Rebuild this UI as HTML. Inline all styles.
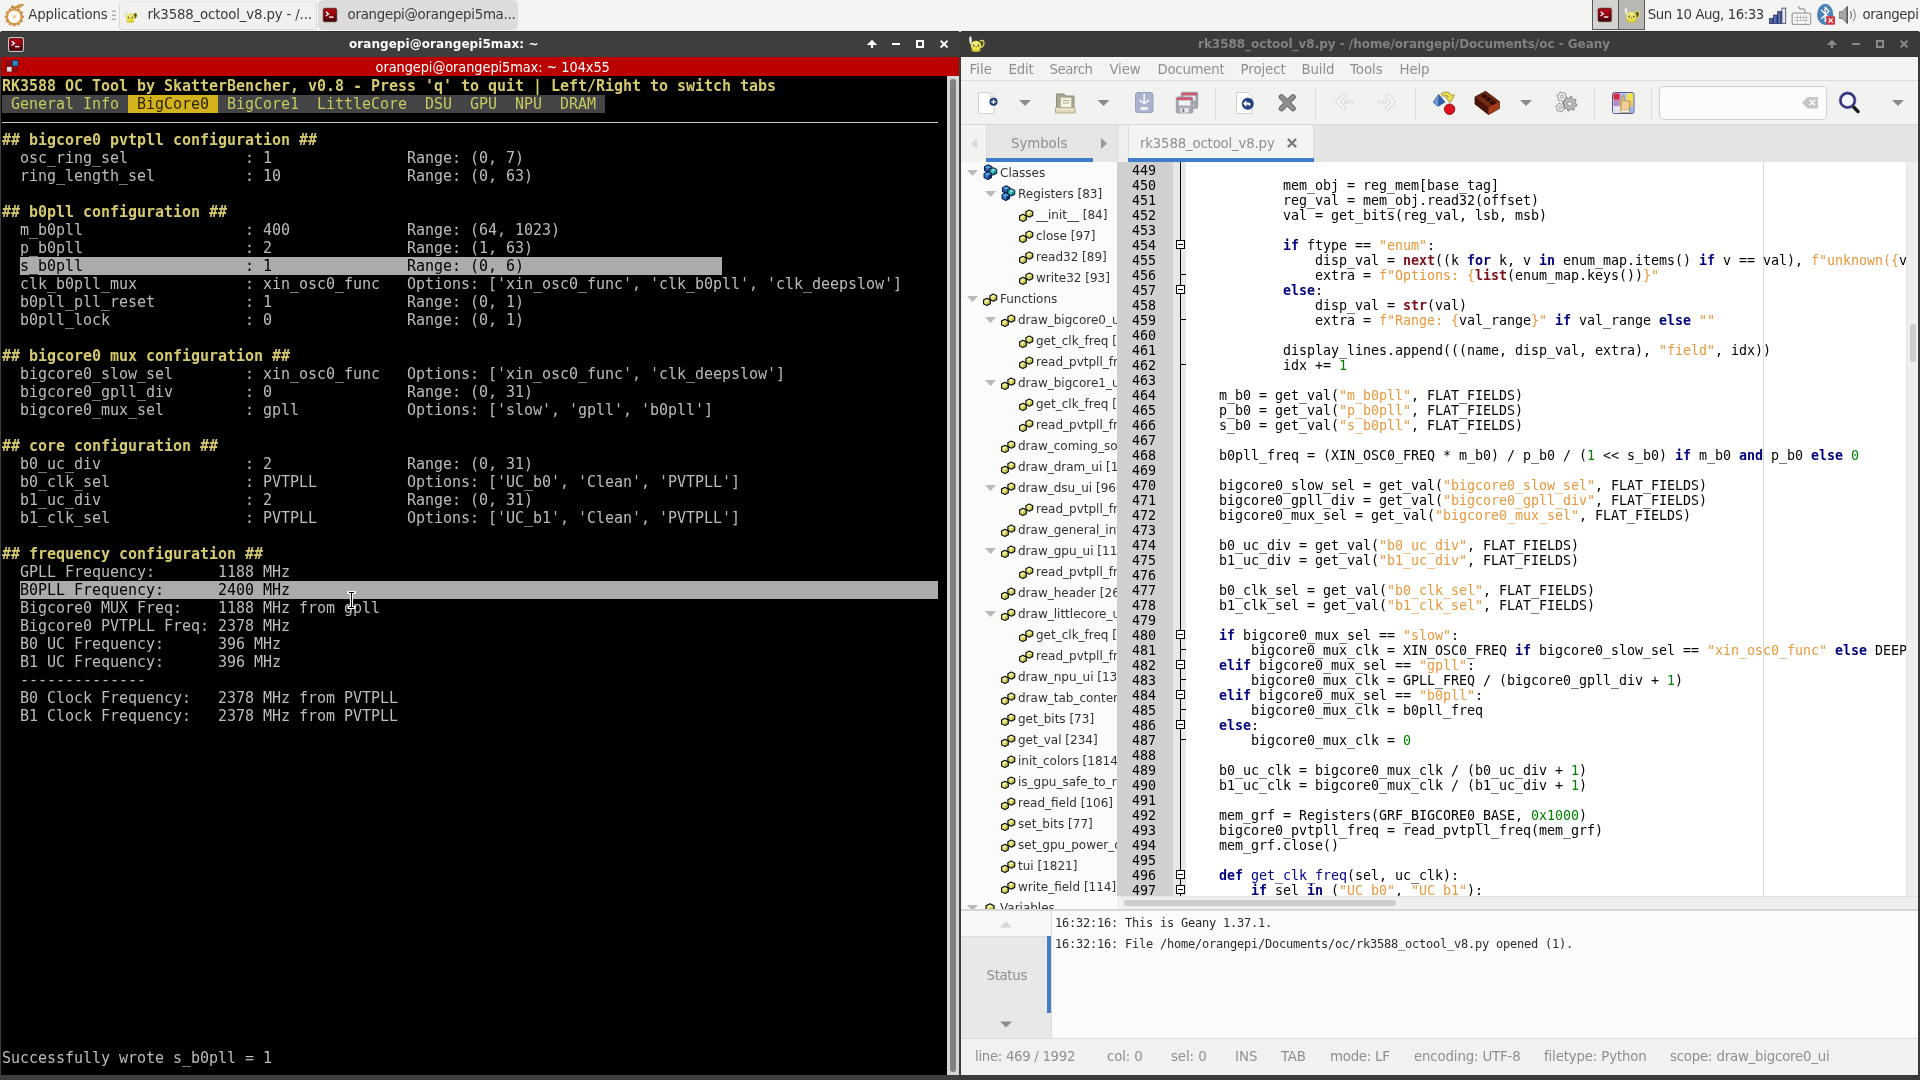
<!DOCTYPE html>
<html lang="en"><head><meta charset="utf-8"><title>desktop</title>
<style>
*{box-sizing:border-box}
html,body{margin:0;padding:0}
body{width:1920px;height:1080px;overflow:hidden;position:relative;background:#f4f4f2;font-family:"DejaVu Sans","Liberation Sans",sans-serif;font-size:13.33px;color:#2e3436}
.abs{position:absolute}
#panel{position:absolute;left:0;top:0;width:1920px;height:31px;background:#f4f4f2}
#panel .t{position:absolute;top:0;height:30px;line-height:29px;white-space:pre;color:#333}
.task{position:absolute;top:1px;height:29px;border:1px solid #dcdcd9;border-radius:3px}
/* terminal window */
#tw{position:absolute;left:0;top:31px;width:960px;height:1049px;background:#3e3e3e;box-shadow:inset 0 1px 0 #2f2f2e;border-radius:3px 3px 0 0}
#tw .title,#gw .title{position:absolute;top:0;height:26px;line-height:26px;font-size:12px;font-weight:bold;color:#fff;white-space:pre}
.wb{position:absolute}
#tw .red{position:absolute;left:1px;top:26px;width:958px;height:19px;background:#bb0000}
#tw .red span{position:absolute;left:374.6px;top:0;height:19px;line-height:21px;color:#fff;white-space:pre;font-family:"DejaVu Sans Condensed","DejaVu Sans",sans-serif;font-stretch:condensed;font-size:14.4px;letter-spacing:-0.074px}
.tm{position:absolute;left:1px;top:45px;width:946px;height:999px;background:#000;overflow:hidden;font-family:"DejaVu Sans Mono","Liberation Mono",monospace;font-size:15px;letter-spacing:-0.03125px;color:#bcbcbc}
.tr{position:absolute;left:1px;height:18px;line-height:18px;white-space:pre}
.hb{font-weight:bold;color:#d6ca6e}
.tb{background:#454547;color:#c6c85e;display:inline-block;height:18px}
.ts{background:#d4b21c;color:#2e2400;display:inline-block;height:18px}
.sl{background:#ababab;color:#000;display:inline-block;height:18px}
.hl{position:absolute;left:1px;width:936px;height:1px;background:#d0d0d0}
#tsb{position:absolute;left:947px;top:45px;width:12px;height:999px;background:#d6d6d6}
#tsb i{position:absolute;left:3px;top:3px;width:6px;height:993px;background:#808080;border-radius:3px}
/* geany window */
#gw{position:absolute;left:960px;top:31px;width:960px;height:1049px;background:#3a3a39;box-shadow:inset 0 1px 0 #2d2d2c;border-radius:3px 3px 0 0}
#gw .title{color:#828282}
#gb{position:absolute;left:1px;top:26px;width:957px;height:1018px;background:#f1f1f0;overflow:hidden}
.mi{color:#8f8f8f}
.cd{position:absolute;margin:0;font-family:"DejaVu Sans Mono","Liberation Mono",monospace;font-size:13.33px;letter-spacing:-0.0254px;line-height:15px;color:#000;white-space:pre}
.cd b{font-weight:normal}
.cd .s{color:#e8983c}
.cd .n{color:#007f00}
.cd .k{color:#00007f;font-weight:bold}
.cd .bi{color:#7c0f1a;font-weight:bold}
.cd .fn{color:#000080}
.fb{position:absolute;width:9px;height:9px;background:#fff;border:1px solid #000}
.fb i{position:absolute;left:1px;top:3px;width:5px;height:1px;background:#000}
.mg{position:absolute;height:21px;line-height:21px;font-family:"DejaVu Sans Mono","Liberation Mono",monospace;font-size:12px;letter-spacing:-0.2246px;color:#2b2b2b;white-space:pre}
#panel,#tw,#gw{will-change:transform}

</style></head><body>
<svg width="0" height="0" style="position:absolute"><defs><g id="ic-class"><path d="M5.20 0.70 L8.90 2.65 L5.20 4.60 L1.50 2.65Z" fill="#4aa6e0"/><path d="M1.50 2.65 L5.20 4.60 L5.20 8.50 L1.50 6.55Z" fill="#1f5fb0"/><path d="M5.20 4.60 L8.90 2.65 L8.90 6.55 L5.20 8.50Z" fill="#123a7a"/><path d="M5.20 0.70 L8.90 2.65 L8.90 6.55 L5.20 8.50 L1.50 6.55 L1.50 2.65Z" fill="none" stroke="#0a1a4a" stroke-width="1.1" stroke-linejoin="round"/><path d="M10.20 3.70 L13.71 5.55 L10.20 7.40 L6.68 5.55Z" fill="#6fe8e0"/><path d="M6.68 5.55 L10.20 7.40 L10.20 11.10 L6.68 9.25Z" fill="#2fc0b8"/><path d="M10.20 7.40 L13.71 5.55 L13.71 9.25 L10.20 11.10Z" fill="#159088"/><path d="M10.20 3.70 L13.71 5.55 L13.71 9.25 L10.20 11.10 L6.68 9.25 L6.68 5.55Z" fill="none" stroke="#0a2a4a" stroke-width="1.1" stroke-linejoin="round"/><path d="M4.80 7.70 L8.50 9.65 L4.80 11.60 L1.10 9.65Z" fill="#4ab0e8"/><path d="M1.10 9.65 L4.80 11.60 L4.80 15.50 L1.10 13.55Z" fill="#2a78c8"/><path d="M4.80 11.60 L8.50 9.65 L8.50 13.55 L4.80 15.50Z" fill="#123a7a"/><path d="M4.80 7.70 L8.50 9.65 L8.50 13.55 L4.80 15.50 L1.10 13.55 L1.10 9.65Z" fill="none" stroke="#0a1a4a" stroke-width="1.1" stroke-linejoin="round"/></g><g id="ic-func"><path d="M10.30 1.00 L13.72 2.80 L10.30 4.60 L6.88 2.80Z" fill="#f4f49a"/><path d="M6.88 2.80 L10.30 4.60 L10.30 8.20 L6.88 6.40Z" fill="#e2e270"/><path d="M10.30 4.60 L13.72 2.80 L13.72 6.40 L10.30 8.20Z" fill="#c4c450"/><path d="M10.30 1.00 L13.72 2.80 L13.72 6.40 L10.30 8.20 L6.88 6.40 L6.88 2.80Z" fill="none" stroke="#111" stroke-width="1.2" stroke-linejoin="round"/><path d="M3.90 5.30 L7.32 7.10 L3.90 8.90 L0.48 7.10Z" fill="#f4f49a"/><path d="M0.48 7.10 L3.90 8.90 L3.90 12.50 L0.48 10.70Z" fill="#e2e270"/><path d="M3.90 8.90 L7.32 7.10 L7.32 10.70 L3.90 12.50Z" fill="#c4c450"/><path d="M3.90 5.30 L7.32 7.10 L7.32 10.70 L3.90 12.50 L0.48 10.70 L0.48 7.10Z" fill="none" stroke="#111" stroke-width="1.2" stroke-linejoin="round"/></g><g id="ic-var"><path d="M7.00 2.80 L10.99 4.90 L7.00 7.00 L3.01 4.90Z" fill="#f4f49a"/><path d="M3.01 4.90 L7.00 7.00 L7.00 11.20 L3.01 9.10Z" fill="#e2e270"/><path d="M7.00 7.00 L10.99 4.90 L10.99 9.10 L7.00 11.20Z" fill="#c4c450"/><path d="M7.00 2.80 L10.99 4.90 L10.99 9.10 L7.00 11.20 L3.01 9.10 L3.01 4.90Z" fill="none" stroke="#111" stroke-width="1.2" stroke-linejoin="round"/></g><path id="ic-exp" d="M0 0 L11 0 L5.5 6Z" fill="#b9b9b9"/><g id="wbtn"><path d="M872 39.8 L877.2 45 H873.1 V48 H870.9 V45 H866.8Z"/><rect x="892" y="43" width="8" height="2"/><path d="M916 40 H924 V48 H916Z M918 42 V46 H922 V42Z" fill-rule="evenodd"/><path d="M940 41.4 L941.4 40 L944.1 42.7 L946.8 40 L948.2 41.4 L945.5 44.1 L948.2 46.8 L946.8 48.2 L944.1 45.5 L941.4 48.2 L940 46.8 L942.7 44.1Z"/></g><g id="geany"><path d="M1.6 0.9 Q2.6 -0.2 3.4 1.2 L3.9 7.6 L2.4 8.2 Q0.6 4 1.6 0.9Z" fill="#f4f4f2" stroke="#b9b9b7" stroke-width="0.4"/><path d="M12 5.4 Q12.4 4.3 14.2 4.4 Q16.2 4.6 16 7.6 Q15.8 10.6 12.8 11.4" fill="#55501a" stroke="#dcd86a" stroke-width="1.1"/><ellipse cx="8" cy="14" rx="4.6" ry="1.9" fill="#c9c422"/><ellipse cx="8" cy="9.8" rx="5.2" ry="5" fill="#e6df4c"/><ellipse cx="7.4" cy="8.6" rx="3.6" ry="3" fill="#efe97e"/><ellipse cx="5.7" cy="9.6" rx="0.75" ry="1.1" fill="#4a4410"/><ellipse cx="10.3" cy="9.6" rx="0.75" ry="1.1" fill="#4a4410"/><path d="M7.4 10.2 L8.8 10.2 L8.1 12.3Z" fill="#a8620c"/></g></defs></svg>
<div id="panel"><div style="position:absolute;left:118.5px;top:0.5px;width:198.5px;height:29.5px;background:#f1f1ef;border:1px solid #d9d9d6;border-top-color:#e6e6e4;border-radius:4px"></div>
<div style="position:absolute;left:317.5px;top:0px;width:200.5px;height:30px;background:#dddcda;border-radius:5px"></div>
<div style="position:absolute;left:1592px;top:0px;width:27px;height:30px;background:#d5d3cf;border:1px solid #5a5a58;border-top:none"></div>
<div style="position:absolute;left:1618px;top:0px;width:27px;height:30px;background:#b9b7b3;border:1px solid #5a5a58;border-top:none"></div>
<div style="position:absolute;left:28.30px;top:5.29px;height:20px;line-height:20px;font-size:13.33px;white-space:pre;letter-spacing:-0.177px;color:#3a3a3a">Applications</div>
<div style="position:absolute;left:147.50px;top:5.29px;height:20px;line-height:20px;font-size:13.33px;white-space:pre;letter-spacing:-0.166px;color:#3a3a3a">rk3588_octool_v8.py - /...</div>
<div style="position:absolute;left:347.50px;top:5.29px;height:20px;line-height:20px;font-size:13.33px;white-space:pre;letter-spacing:-0.254px;color:#3a3a3a">orangepi@orangepi5ma...</div>
<div style="position:absolute;left:1647.70px;top:5.49px;height:20px;line-height:20px;font-size:13.33px;white-space:pre;letter-spacing:-0.442px;color:#3a3a3a">Sun 10 Aug, 16:33</div>
<div style="position:absolute;left:1862.50px;top:5.29px;height:20px;line-height:20px;font-size:13.33px;white-space:pre;letter-spacing:-0.385px;color:#3a3a3a">orangepi</div>
<svg style="position:absolute;left:0;top:0" width="1920" height="31" viewBox="0 0 1920 31">
<path d="M23.8 16.8 L23.5 17.4 L22.8 17.9 L22.1 18.4 L21.7 18.8 L21.8 19.4 L22.2 20.1 L22.6 20.9 L22.5 21.6 L22.0 21.9 L21.1 22.0 L20.3 22.1 L19.7 22.2 L19.6 22.8 L19.5 23.6 L19.4 24.5 L19.1 25.0 L18.4 25.1 L17.6 24.7 L16.9 24.3 L16.3 24.2 L15.9 24.6 L15.4 25.3 L14.9 26.0 L14.3 26.3 L13.7 26.0 L13.2 25.3 L12.7 24.6 L12.3 24.2 L11.7 24.3 L11.0 24.7 L10.2 25.1 L9.6 25.0 L9.2 24.5 L9.1 23.6 L9.0 22.8 L8.9 22.2 L8.3 22.1 L7.5 22.0 L6.6 21.9 L6.1 21.6 L6.0 20.9 L6.4 20.1 L6.8 19.4 L6.9 18.8 L6.5 18.4 L5.8 17.9 L5.1 17.4 L4.8 16.8 L5.1 16.2 L5.8 15.7 L6.5 15.2 L6.9 14.8 L6.8 14.2 L6.4 13.5 L6.0 12.7 L6.1 12.1 L6.6 11.7 L7.5 11.6 L8.3 11.5 L8.9 11.4 L9.0 10.8 L9.1 10.0 L9.2 9.1 L9.5 8.6 L10.2 8.5 L11.0 8.9 L11.7 9.3 L12.3 9.4 L12.7 9.0 L13.2 8.3 L13.7 7.6 L14.3 7.3 L14.9 7.6 L15.4 8.3 L15.9 9.0 L16.3 9.4 L16.9 9.3 L17.6 8.9 L18.4 8.5 L19.1 8.6 L19.4 9.1 L19.5 10.0 L19.6 10.8 L19.7 11.4 L20.3 11.5 L21.1 11.6 L22.0 11.7 L22.5 12.0 L22.6 12.7 L22.2 13.5 L21.8 14.2 L21.7 14.8 L22.1 15.2 L22.8 15.7 L23.5 16.2Z" fill="#d99445" stroke="#c07a30" stroke-width="0.6"/>
<circle cx="14.3" cy="16.8" r="6.3" fill="#fdfaf4"/>
<circle cx="14.3" cy="16.8" r="2" fill="#f3d9b8"/><circle cx="14.3" cy="16.8" r="0.9" fill="#e8b888"/>
<path d="M10.5 7.3 Q12.5 3.6 14.5 7 Q19 3 24.2 4.3 Q21 8.8 14.6 8.6 Q12 9 10.5 7.3Z" fill="#b98a3a"/><path d="M15.5 7.2 Q19.5 4.2 23.6 4.5 Q20.5 7.9 15.5 7.2Z" fill="#e39a4a"/>
<rect x="111.8" y="10.7" width="4" height="1" fill="#8a8a88"/>
<rect x="111.8" y="14.7" width="4" height="1" fill="#8a8a88"/>
<rect x="111.8" y="18.7" width="4" height="1" fill="#8a8a88"/>
<defs><linearGradient id="tg" x1="0" y1="0" x2="0" y2="1"><stop offset="0" stop-color="#c80a14"/><stop offset="0.5" stop-color="#8c0410"/><stop offset="1" stop-color="#3c0408"/></linearGradient></defs>
<svg x="123.6" y="9.3" width="14.4" height="14.4" viewBox="0 0 17 17"><use href="#geany"/></svg>
<rect x="323.0" y="8.0" width="14" height="14" rx="1.6" fill="url(#tg)" stroke="#a49c9a" stroke-width="1"/>
<rect x="323.8" y="8.8" width="12.4" height="12.4" rx="1" fill="none" stroke="#3a0a0a" stroke-width="0.7"/>
<path d="M325.8 11.8 L328.5 13.9 L325.8 16.0" fill="none" stroke="#fff" stroke-width="1.3"/><path d="M329.1 17.1 H333.5" stroke="#fff" stroke-width="1.4"/>
<rect x="1597.8" y="7.9" width="14" height="14" rx="1.6" fill="url(#tg)" stroke="#a49c9a" stroke-width="1"/>
<rect x="1598.6" y="8.700000000000001" width="12.4" height="12.4" rx="1" fill="none" stroke="#3a0a0a" stroke-width="0.7"/>
<path d="M1600.6 11.7 L1603.3 13.8 L1600.6 15.9" fill="none" stroke="#fff" stroke-width="1.3"/><path d="M1603.8999999999999 17.0 H1608.3" stroke="#fff" stroke-width="1.4"/>
<svg x="1623.6" y="7" width="16.8" height="16.8" viewBox="0 0 17 17"><use href="#geany"/></svg>
<rect x="1769.3" y="18.6" width="3.9" height="5" fill="#3c4f90" stroke="#1e2a58" stroke-width="0.7"/>
<rect x="1770.2" y="19.4" width="1.1" height="3.6" fill="#7486c0"/>
<rect x="1773.5" y="15.1" width="3.9" height="8.5" fill="#3c4f90" stroke="#1e2a58" stroke-width="0.7"/>
<rect x="1774.4" y="15.9" width="1.1" height="7.1" fill="#7486c0"/>
<rect x="1777.7" y="11.6" width="3.9" height="12" fill="#3c4f90" stroke="#1e2a58" stroke-width="0.7"/>
<rect x="1778.6" y="12.4" width="1.1" height="10.6" fill="#7486c0"/>
<rect x="1781.9" y="8.1" width="3.9" height="15.5" fill="#e4e6ea" stroke="#1e2a58" stroke-width="0.7"/>
<rect x="1792.2" y="13.2" width="18.4" height="11.2" rx="1.4" fill="#fdfdfc" stroke="#9e9e9c" stroke-width="1.3"/>
<path d="M1798.8 6 Q1798.4 8.6 1801 8.8 L1803.6 9 Q1805.2 9.4 1805 11.2 V13" fill="none" stroke="#9e9e9c" stroke-width="1.3"/>
<path d="M1794.2 17.4 H1808.6 M1794.2 20.4 H1808.6 M1797.4 15 V20.4 M1800.6 15 V20.4 M1803.8 15 V20.4 M1806.6 15 V20.4 M1797.4 20.4 V22.8 M1805.4 20.4 V22.8" stroke="#b4b4b2" stroke-width="0.9" fill="none"/>
<ellipse cx="1825.2" cy="14.4" rx="8.1" ry="10.6" fill="#4c82ba"/>
<path d="M1821.3 10 L1829 17.6 L1825.2 21.6 V7.2 L1829 11.2 L1821.3 18.8" fill="none" stroke="#fff" stroke-width="1.3" stroke-linejoin="round"/>
<rect x="1826.4" y="16.3" width="8.6" height="8.4" rx="1" fill="#d8323e"/><path d="M1828.6 18.4 L1832.8 22.6 M1832.8 18.4 L1828.6 22.6" stroke="#fff" stroke-width="1.3"/>
<path d="M1839.4 11.8 H1842.2 L1847.2 6.4 V23.6 L1842.2 18.4 H1839.4Z" fill="#a8a8a6" stroke="#6e6e6c" stroke-width="0.8" stroke-linejoin="round"/>
<path d="M1847.2 6.4 V23.6" stroke="#4a4a48" stroke-width="1.2"/>
<path d="M1850.3 11.4 Q1852.6 15 1850.3 18.8" fill="none" stroke="#6a6a68" stroke-width="1.1"/><path d="M1853.2 9 Q1857.4 15 1853.2 21.2" fill="none" stroke="#8a8a88" stroke-width="1.1"/>
</svg></div>
<div id="tw">
<div class="title" style="left:349px;letter-spacing:0.055px">orangepi@orangepi5max: ~</div>
<svg class="wb" viewBox="860 32 100 25" width="100" height="25" style="left:860px;top:1px"><use href="#wbtn" fill="#fff"/></svg>
<svg style="position:absolute;left:8px;top:6px" width="16" height="15" viewBox="0 0 16 15"><rect x="0.6" y="0.6" width="14.8" height="13.8" rx="1.6" fill="url(#tg)" stroke="#c8c4c4" stroke-width="1.2"/><rect x="1.8" y="1.8" width="12.4" height="11.4" rx="0.8" fill="none" stroke="#3a0a0a" stroke-width="0.7"/><path d="M3.6 4.2 L6.4 6.3 L3.6 8.4" fill="none" stroke="#fff" stroke-width="1.3"/><path d="M7 9.6 H11.4" stroke="#fff" stroke-width="1.4"/></svg>
<div class="red"><span>orangepi@orangepi5max: ~ 104x55</span>
<svg style="position:absolute;left:5px;top:3px" width="13" height="13" viewBox="0 0 13 13"><rect x="0" y="0" width="6" height="6" fill="#8a0a12"/><rect x="6.5" y="0.5" width="5.5" height="5.5" fill="#2a8ac8" stroke="#1a3a5a" stroke-width="0.8"/><rect x="0.5" y="6.5" width="5.5" height="5.5" fill="#e8d8d8" stroke="#5a1a1a" stroke-width="0.8"/><rect x="6.5" y="6.5" width="5.5" height="5.5" fill="#8a0a12"/></svg></div>
<div class="tm">
<div class="tr hb" style="top:1px">RK3588 OC Tool by SkatterBencher, v0.8 - Press 'q' to quit | Left/Right to switch tabs</div>
<div class="tr" style="top:19px"><span class="tb"> General Info </span><span class="ts"> BigCore0 </span><span class="tb"> BigCore1  LittleCore  DSU  GPU  NPU  DRAM </span></div>
<div class="hl" style="top:46px"></div>
<div class="tr hb" style="top:55px">## bigcore0 pvtpll configuration ##</div>
<div class="tr" style="top:73px">  osc_ring_sel             : 1               Range: (0, 7)</div>
<div class="tr" style="top:91px">  ring_length_sel          : 10              Range: (0, 63)</div>
<div class="tr hb" style="top:127px">## b0pll configuration ##</div>
<div class="tr" style="top:145px">  m_b0pll                  : 400             Range: (64, 1023)</div>
<div class="tr" style="top:163px">  p_b0pll                  : 2               Range: (1, 63)</div>
<div class="tr" style="top:181px">  <span class="sl">s_b0pll                  : 1               Range: (0, 6)                      </span></div>
<div class="tr" style="top:199px">  clk_b0pll_mux            : xin_osc0_func   Options: ['xin_osc0_func', 'clk_b0pll', 'clk_deepslow']</div>
<div class="tr" style="top:217px">  b0pll_pll_reset          : 1               Range: (0, 1)</div>
<div class="tr" style="top:235px">  b0pll_lock               : 0               Range: (0, 1)</div>
<div class="tr hb" style="top:271px">## bigcore0 mux configuration ##</div>
<div class="tr" style="top:289px">  bigcore0_slow_sel        : xin_osc0_func   Options: ['xin_osc0_func', 'clk_deepslow']</div>
<div class="tr" style="top:307px">  bigcore0_gpll_div        : 0               Range: (0, 31)</div>
<div class="tr" style="top:325px">  bigcore0_mux_sel         : gpll            Options: ['slow', 'gpll', 'b0pll']</div>
<div class="tr hb" style="top:361px">## core configuration ##</div>
<div class="tr" style="top:379px">  b0_uc_div                : 2               Range: (0, 31)</div>
<div class="tr" style="top:397px">  b0_clk_sel               : PVTPLL          Options: ['UC_b0', 'Clean', 'PVTPLL']</div>
<div class="tr" style="top:415px">  b1_uc_div                : 2               Range: (0, 31)</div>
<div class="tr" style="top:433px">  b1_clk_sel               : PVTPLL          Options: ['UC_b1', 'Clean', 'PVTPLL']</div>
<div class="tr hb" style="top:469px">## frequency configuration ##</div>
<div class="tr" style="top:487px">  GPLL Frequency:       1188 MHz</div>
<div class="tr" style="top:505px">  <span class="sl">B0PLL Frequency:      2400 MHz                                                                        </span></div>
<div class="tr" style="top:523px">  Bigcore0 MUX Freq:    1188 MHz from gpll</div>
<div class="tr" style="top:541px">  Bigcore0 PVTPLL Freq: 2378 MHz</div>
<div class="tr" style="top:559px">  B0 UC Frequency:      396 MHz</div>
<div class="tr" style="top:577px">  B1 UC Frequency:      396 MHz</div>
<div class="tr" style="top:595px">  --------------</div>
<div class="tr" style="top:613px">  B0 Clock Frequency:   2378 MHz from PVTPLL</div>
<div class="tr" style="top:631px">  B1 Clock Frequency:   2378 MHz from PVTPLL</div>
<div class="tr" style="top:973px">Successfully wrote s_b0pll = 1</div>
<svg style="position:absolute;left:346px;top:514px" width="9" height="20" viewBox="347 590 9 20"><path d="M349 592.5 H354 M349 607.5 H354 M351.5 592.5 V607.5" stroke="#fff" stroke-width="3.2" stroke-linecap="square"/><path d="M349 592.5 H354 M349 607.5 H354 M351.5 592.5 V607.5" stroke="#000" stroke-width="1.1"/></svg>
</div>
<div id="tsb"><i></i></div>
</div>
<div id="gw">
<div class="title" style="left:238px;letter-spacing:-0.03px">rk3588_octool_v8.py - /home/orangepi/Documents/oc - Geany</div>
<svg class="wb" viewBox="860 32 100 25" width="100" height="25" style="left:860px;top:1px"><use href="#wbtn" fill="#8b8b8b"/></svg>
<svg style="position:absolute;left:7.5px;top:5px" width="17" height="17" viewBox="0 0 17 17"><use href="#geany"/></svg>
<div id="gb">
<div style="position:absolute;left:0px;top:0px;width:959px;height:24px;background:#f3f3f2;border-bottom:1px solid #dedede"></div>
<div class="mi" style="position:absolute;left:8.40px;top:3.49px;height:20px;line-height:20px;font-size:13.33px;white-space:pre;letter-spacing:0.049px;">File</div>
<div class="mi" style="position:absolute;left:47.50px;top:3.49px;height:20px;line-height:20px;font-size:13.33px;white-space:pre;letter-spacing:-0.179px;">Edit</div>
<div class="mi" style="position:absolute;left:88.40px;top:3.49px;height:20px;line-height:20px;font-size:13.33px;white-space:pre;letter-spacing:-0.433px;">Search</div>
<div class="mi" style="position:absolute;left:148.40px;top:3.49px;height:20px;line-height:20px;font-size:13.33px;white-space:pre;letter-spacing:-0.108px;">View</div>
<div class="mi" style="position:absolute;left:196.50px;top:3.49px;height:20px;line-height:20px;font-size:13.33px;white-space:pre;letter-spacing:-0.276px;">Document</div>
<div class="mi" style="position:absolute;left:279.60px;top:3.49px;height:20px;line-height:20px;font-size:13.33px;white-space:pre;letter-spacing:-0.087px;">Project</div>
<div class="mi" style="position:absolute;left:340.50px;top:3.49px;height:20px;line-height:20px;font-size:13.33px;white-space:pre;letter-spacing:-0.122px;">Build</div>
<div class="mi" style="position:absolute;left:389.00px;top:3.49px;height:20px;line-height:20px;font-size:13.33px;white-space:pre;letter-spacing:-0.047px;">Tools</div>
<div class="mi" style="position:absolute;left:438.60px;top:3.49px;height:20px;line-height:20px;font-size:13.33px;white-space:pre;letter-spacing:-0.160px;">Help</div>
<div style="position:absolute;left:0px;top:25px;width:959px;height:43px;background:#f2f2f1;border-bottom:1px solid #d9d9d8"></div>
<svg style="position:absolute;left:0;top:25px" width="959" height="43" viewBox="961 82 959 43">
<path d="M978.5 92.5 H990 L994 96.5 V113.5 H978.5Z" fill="#fdfdfd" stroke="#cfcfcf" stroke-width="1"/>
<path d="M990 92.5 V96.5 H994" fill="none" stroke="#d4d4d4" stroke-width="1"/>
<circle cx="993.5" cy="101.8" r="4" fill="#1d3b78"/><path d="M991.2 101.8 H995.8 M993.5 99.5 V104.1" stroke="#fff" stroke-width="1.3"/>
<path d="M1019 100 L1031 100 L1025 106Z" fill="#8b8b8b"/>
<path d="M1056.5 94 H1064 L1066 96 H1074 V108 H1056.5Z" fill="#a9a692" stroke="#8f8c78" stroke-width="1"/>
<rect x="1060.5" y="97.5" width="11" height="11" fill="#f6f3e2" stroke="#b9b59c" stroke-width="0.8"/>
<path d="M1062.5 100.5 H1069.5 M1062.5 103 H1069.5" stroke="#b5b19a" stroke-width="1"/>
<path d="M1055.5 107.5 H1075 V113 H1055.5Z" fill="#ddd8b8" stroke="#b4af90" stroke-width="1"/>
<path d="M1056.5 109.5 H1074" stroke="#ece8d0" stroke-width="1"/>
<path d="M1097.5 100 L1109.5 100 L1103.5 106Z" fill="#8b8b8b"/>
<rect x="1135.5" y="92.5" width="17.5" height="20" rx="2.5" fill="#a9b3cf" stroke="#96a0bd" stroke-width="1"/>
<path d="M1144.2 94.5 V103.5 M1140 100.5 Q1144.2 105.5 1148.5 100.5" fill="none" stroke="#f2f4f8" stroke-width="1.8" stroke-linecap="round"/>
<rect x="1140.5" y="107" width="7.5" height="3" fill="#eef0f5"/>
<rect x="1181.2" y="92.3" width="16.5" height="16" rx="1.5" fill="#a6a7b2" stroke="#8f909c" stroke-width="0.8"/>
<rect x="1181.7" y="92.8" width="15.5" height="2.5" fill="#d4586c"/>
<rect x="1183.7" y="95.8" width="11.5" height="5" fill="#f4f4f6"/>
<rect x="1185.2" y="103.3" width="8.5" height="4.6" fill="#e8e8ec"/><rect x="1187.2" y="103.8" width="2" height="3.6" fill="#80808c"/>
<rect x="1176.3" y="97" width="16.5" height="16" rx="1.5" fill="#a6a7b2" stroke="#8f909c" stroke-width="0.8"/>
<rect x="1176.8" y="97.5" width="15.5" height="2.5" fill="#d4586c"/>
<rect x="1178.8" y="100.5" width="11.5" height="5" fill="#f4f4f6"/>
<rect x="1180.3" y="108" width="8.5" height="4.6" fill="#e8e8ec"/><rect x="1182.3" y="108.5" width="2" height="3.6" fill="#80808c"/>
<rect x="1215" y="88" width="1" height="32" fill="#dcdcdb"/>
<path d="M1236.5 92.5 H1248 L1252 96.5 V113.5 H1236.5Z" fill="#fdfdfd" stroke="#cfcfcf" stroke-width="1"/>
<circle cx="1247.8" cy="103.8" r="6" fill="#21407e"/>
<path d="M1249.2 106.6 Q1252.4 103 1248.4 102.4 H1246.4 V100.3 L1243 103.6 L1246.4 106.9 V104.8 H1248 Q1249.6 104.9 1249.2 106.6Z" fill="#fff"/>
<path d="M1281.5 97 L1293 108.5 M1293 97 L1281.5 108.5" stroke="#6a6a68" stroke-width="5.6" stroke-linecap="round"/>
<path d="M1281.5 97 L1293 108.5 M1293 97 L1281.5 108.5" stroke="#8f8f8c" stroke-width="3.8" stroke-linecap="round"/>
<rect x="1315" y="88" width="1" height="32" fill="#dcdcdb"/>
<path d="M1343.5 93.5 L1335.5 102 L1343.5 110.5 L1346 108.3 L1340 102 L1346 95.7Z" fill="#f8f8f7" stroke="#cfcfce" stroke-width="1"/>
<circle cx="1346.5" cy="102" r="1.9" fill="none" stroke="#d2d2d1" stroke-width="0.9"/><circle cx="1351.5" cy="102" r="1.7" fill="none" stroke="#d8d8d7" stroke-width="0.9"/>
<path d="M1387.5 93.5 L1395.5 102 L1387.5 110.5 L1385 108.3 L1391 102 L1385 95.7Z" fill="#f8f8f7" stroke="#cfcfce" stroke-width="1"/>
<circle cx="1384.5" cy="102" r="1.9" fill="none" stroke="#d2d2d1" stroke-width="0.9"/><circle cx="1379.5" cy="102" r="1.7" fill="none" stroke="#d8d8d7" stroke-width="0.9"/>
<rect x="1415" y="88" width="1" height="32" fill="#dcdcdb"/>
<path d="M1438.5 94.5 L1433.3 102.3 L1438 106.3 L1445 102Z" fill="#6f9fd6" stroke="#2c4f86" stroke-width="0.8" stroke-linejoin="round"/><path d="M1438.5 94.5 L1438 106.3 L1445 102Z" fill="#2f5fa8"/>
<path d="M1441 94 Q1447 89.5 1451.5 95 L1454.5 95 L1450 102.5 L1445.5 97 L1448.5 96.5 Q1446 93.5 1443 96.5Z" fill="#f2e34a" stroke="#8a7d1a" stroke-width="0.8" stroke-linejoin="round"/>
<circle cx="1449.6" cy="109.2" r="5.2" fill="#e01020" stroke="#8a0a10" stroke-width="0.9"/>
<path d="M1475 97 L1485.5 91.3 L1499.3 101.5 L1499.3 108.5 L1488.5 114.6 L1475 104Z" fill="#74280f" stroke="#2a0c04" stroke-width="0.8" stroke-linejoin="round"/>
<path d="M1475 97 L1488.5 107.5 L1488.5 114.6 L1475 104Z" fill="#481408"/>
<path d="M1488.5 107.5 L1499.3 101.5 L1499.3 108.5 L1488.5 114.6Z" fill="#a53c1a"/>
<path d="M1480.5 96 L1484.5 93.8 L1488 96.4 L1484 98.6Z M1484.8 99.2 L1488.8 97 L1492.3 99.6 L1488.3 101.8Z M1489.1 102.4 L1493.1 100.2 L1496.6 102.8 L1492.6 105Z" fill="#2a0c04"/>
<path d="M1520 100 L1532 100 L1526 106Z" fill="#8b8b8b"/>
<path d="M1567.0 97.3 L1566.7 98.6 L1565.0 99.0 L1564.3 99.7 L1564.1 101.4 L1562.8 101.7 L1561.6 100.5 L1560.7 100.3 L1559.1 100.9 L1558.1 100.0 L1558.6 98.3 L1558.3 97.4 L1557.0 96.3 L1557.3 95.0 L1559.0 94.6 L1559.7 93.9 L1559.9 92.2 L1561.2 91.9 L1562.4 93.1 L1563.3 93.3 L1564.9 92.7 L1565.9 93.6 L1565.4 95.3 L1565.7 96.2Z" fill="#f0f0ef" stroke="#7a7a78" stroke-width="0.8" stroke-linejoin="round"/>
<circle cx="1562" cy="96.8" r="1.5" fill="#f4f4f4" stroke="#7a7a78" stroke-width="0.7"/>
<path d="M1564.9 108.0 L1564.6 109.1 L1563.1 109.5 L1562.5 110.1 L1562.2 111.7 L1561.0 112.0 L1560.0 110.9 L1559.1 110.7 L1557.6 111.2 L1556.7 110.4 L1557.2 108.9 L1556.9 108.0 L1555.7 107.0 L1556.0 105.9 L1557.5 105.5 L1558.1 104.9 L1558.4 103.3 L1559.6 103.0 L1560.6 104.1 L1561.5 104.3 L1563.0 103.8 L1563.9 104.6 L1563.4 106.1 L1563.7 107.0Z" fill="#f0f0ef" stroke="#7a7a78" stroke-width="0.8" stroke-linejoin="round"/>
<circle cx="1560.3" cy="107.5" r="1.4" fill="#f4f4f4" stroke="#7a7a78" stroke-width="0.7"/>
<path d="M1577.0 104.5 L1576.7 105.9 L1574.5 106.3 L1573.9 107.2 L1574.4 109.4 L1573.2 110.2 L1571.3 108.9 L1570.3 109.1 L1569.1 111.0 L1567.7 110.7 L1567.3 108.5 L1566.4 107.9 L1564.2 108.4 L1563.4 107.2 L1564.7 105.3 L1564.5 104.3 L1562.6 103.1 L1562.9 101.7 L1565.1 101.3 L1565.7 100.4 L1565.2 98.2 L1566.4 97.4 L1568.3 98.7 L1569.3 98.5 L1570.5 96.6 L1571.9 96.9 L1572.3 99.1 L1573.2 99.7 L1575.4 99.2 L1576.2 100.4 L1574.9 102.3 L1575.1 103.3Z" fill="#b9bcbc" stroke="#6e7070" stroke-width="0.8" stroke-linejoin="round"/>
<circle cx="1569.8" cy="103.8" r="2.2" fill="#f4f4f4" stroke="#6e7070" stroke-width="0.7"/>
<rect x="1594" y="88" width="1" height="32" fill="#dcdcdb"/>
<rect x="1612.5" y="92.5" width="21.5" height="21" rx="2" fill="#e8e8f0" stroke="#4a5a9a" stroke-width="1"/>
<rect x="1613.4" y="93.4" width="6.4" height="6.3" fill="#d62a44"/>
<rect x="1620.1" y="93.4" width="6.4" height="6.3" fill="#a9b4e4"/>
<rect x="1626.8" y="93.4" width="6.4" height="6.3" fill="#efe244"/>
<rect x="1613.4" y="100.0" width="6.4" height="6.3" fill="#b78bc6"/>
<rect x="1620.1" y="100.0" width="6.4" height="6.3" fill="#c9b0b0"/>
<rect x="1626.8" y="100.0" width="6.4" height="6.3" fill="#e8c860"/>
<rect x="1613.4" y="106.6" width="6.4" height="6.3" fill="#e8e4ec"/>
<rect x="1620.1" y="106.6" width="6.4" height="6.3" fill="#b8e0a0"/>
<rect x="1626.8" y="106.6" width="6.4" height="6.3" fill="#a0b0e0"/>
<path d="M1621 110.5 V103 L1619.5 101 Q1620.5 99.5 1622 101.5 V96.5 Q1623 95 1624 96.5 V100.5 Q1625 99.5 1626 100.8 Q1627 100 1628 101.2 Q1629.2 100.8 1629.6 102.2 V107 L1628.6 110.5Z" fill="#f0cf96" stroke="#a8803c" stroke-width="0.8" stroke-linejoin="round"/>
<rect x="1620.5" y="110" width="8.8" height="2.4" fill="#f8f4e8" stroke="#b09860" stroke-width="0.6"/>
<rect x="1651" y="88" width="1" height="32" fill="#dcdcdb"/>
<rect x="1659.5" y="86.5" width="167" height="33" rx="4.5" fill="#fcfcfc" stroke="#cfcfce" stroke-width="1"/>
<path d="M1802 102.7 L1807.5 97 H1818 V108.5 H1807.5Z" fill="#c6c6c5"/><path d="M1809.8 100 L1815 105.3 M1815 100 L1809.8 105.3" stroke="#fbfbfb" stroke-width="1.6"/>
<path d="M1852.5 106 L1858 111.5" stroke="#1a1a1a" stroke-width="3.4" stroke-linecap="round"/>
<circle cx="1847.6" cy="100.3" r="7.2" fill="#f6f7fb" stroke="#34347e" stroke-width="2.6"/>
<circle cx="1847.6" cy="100.3" r="8.4" fill="none" stroke="#6a6aa8" stroke-width="0.6"/>
<path d="M1892 100 L1904 100 L1898 106Z" fill="#8b8b8b"/>
</svg>
<div style="position:absolute;left:0px;top:68px;width:959px;height:37px;background:#e4e4e3"></div>
<div style="position:absolute;left:0px;top:68px;width:25px;height:37px;background:#f2f2f1"></div>
<div style="position:absolute;left:25px;top:68px;width:131px;height:37px;background:#e6e5e4;border-left:1px solid #dddddc"></div>
<div style="position:absolute;left:25px;top:101px;width:107px;height:4px;background:#3d7dca"></div>
<div class="mi" style="position:absolute;left:50.00px;top:76.89px;height:20px;line-height:20px;font-size:13.33px;white-space:pre;letter-spacing:-0.043px;">Symbols</div>
<svg style="position:absolute;left:9px;top:80px" width="8" height="13"><path d="M7 1 L1 6.5 L7 12Z" fill="#d9d9d8"/></svg>
<svg style="position:absolute;left:139px;top:80px" width="8" height="13"><path d="M1 1 L7 6.5 L1 12Z" fill="#9a9a9a"/></svg>
<div style="position:absolute;left:156px;top:68px;width:11px;height:37px;background:#efefee;border-left:1px solid #dcdcdb"></div>
<div style="position:absolute;left:167px;top:68px;width:186px;height:37px;background:#f4f4f3;border-left:1px solid #dcdcdb;border-right:1px solid #dcdcdb"></div>
<div style="position:absolute;left:167px;top:101px;width:186px;height:4px;background:#3d7dca"></div>
<div class="mi" style="position:absolute;left:179.00px;top:76.89px;height:20px;line-height:20px;font-size:13.33px;white-space:pre;letter-spacing:-0.186px;">rk3588_octool_v8.py</div>
<svg style="position:absolute;left:325px;top:80px" width="12" height="12"><path d="M2.5 2.5 L9.5 9.5 M9.5 2.5 L2.5 9.5" stroke="#7a7a7a" stroke-width="2.4" stroke-linecap="round"/></svg>
<div id="side" style="position:absolute;left:1px;top:105px;width:155px;height:749px;background:#fbfbfb;overflow:hidden;font-size:12px;color:#2e3436">
<svg style="position:absolute;left:4.5px;top:8.0px" width="11" height="6"><use href="#ic-exp"/></svg>
<svg style="position:absolute;left:21px;top:1.8px" width="15" height="17"><use href="#ic-class"/></svg>
<div style="position:absolute;left:38.00px;top:0.75px;height:20px;line-height:20px;font-size:12px;white-space:pre;">Classes</div>
<svg style="position:absolute;left:22.5px;top:29.0px" width="11" height="6"><use href="#ic-exp"/></svg>
<svg style="position:absolute;left:39px;top:22.8px" width="15" height="17"><use href="#ic-class"/></svg>
<div style="position:absolute;left:56.00px;top:21.75px;height:20px;line-height:20px;font-size:12px;white-space:pre;">Registers [83]</div>
<svg style="position:absolute;left:57px;top:46.7px" width="15" height="14"><use href="#ic-func"/></svg>
<div style="position:absolute;left:74.00px;top:42.75px;height:20px;line-height:20px;font-size:12px;white-space:pre;">__init__ [84]</div>
<svg style="position:absolute;left:57px;top:67.7px" width="15" height="14"><use href="#ic-func"/></svg>
<div style="position:absolute;left:74.00px;top:63.75px;height:20px;line-height:20px;font-size:12px;white-space:pre;">close [97]</div>
<svg style="position:absolute;left:57px;top:88.7px" width="15" height="14"><use href="#ic-func"/></svg>
<div style="position:absolute;left:74.00px;top:84.75px;height:20px;line-height:20px;font-size:12px;white-space:pre;">read32 [89]</div>
<svg style="position:absolute;left:57px;top:109.7px" width="15" height="14"><use href="#ic-func"/></svg>
<div style="position:absolute;left:74.00px;top:105.75px;height:20px;line-height:20px;font-size:12px;white-space:pre;">write32 [93]</div>
<svg style="position:absolute;left:4.5px;top:134.0px" width="11" height="6"><use href="#ic-exp"/></svg>
<svg style="position:absolute;left:21px;top:130.7px" width="15" height="14"><use href="#ic-func"/></svg>
<div style="position:absolute;left:38.00px;top:126.75px;height:20px;line-height:20px;font-size:12px;white-space:pre;">Functions</div>
<svg style="position:absolute;left:22.5px;top:155.0px" width="11" height="6"><use href="#ic-exp"/></svg>
<svg style="position:absolute;left:39px;top:151.7px" width="15" height="14"><use href="#ic-func"/></svg>
<div style="position:absolute;left:56.00px;top:147.75px;height:20px;line-height:20px;font-size:12px;white-space:pre;">draw_bigcore0_ui [443]</div>
<svg style="position:absolute;left:57px;top:172.7px" width="15" height="14"><use href="#ic-func"/></svg>
<div style="position:absolute;left:74.00px;top:168.75px;height:20px;line-height:20px;font-size:12px;white-space:pre;">get_clk_freq [496]</div>
<svg style="position:absolute;left:57px;top:193.7px" width="15" height="14"><use href="#ic-func"/></svg>
<div style="position:absolute;left:74.00px;top:189.75px;height:20px;line-height:20px;font-size:12px;white-space:pre;">read_pvtpll_freq [429]</div>
<svg style="position:absolute;left:22.5px;top:218.0px" width="11" height="6"><use href="#ic-exp"/></svg>
<svg style="position:absolute;left:39px;top:214.7px" width="15" height="14"><use href="#ic-func"/></svg>
<div style="position:absolute;left:56.00px;top:210.75px;height:20px;line-height:20px;font-size:12px;white-space:pre;">draw_bigcore1_ui [604]</div>
<svg style="position:absolute;left:57px;top:235.7px" width="15" height="14"><use href="#ic-func"/></svg>
<div style="position:absolute;left:74.00px;top:231.75px;height:20px;line-height:20px;font-size:12px;white-space:pre;">get_clk_freq [657]</div>
<svg style="position:absolute;left:57px;top:256.7px" width="15" height="14"><use href="#ic-func"/></svg>
<div style="position:absolute;left:74.00px;top:252.75px;height:20px;line-height:20px;font-size:12px;white-space:pre;">read_pvtpll_freq [590]</div>
<svg style="position:absolute;left:39px;top:277.7px" width="15" height="14"><use href="#ic-func"/></svg>
<div style="position:absolute;left:56.00px;top:273.75px;height:20px;line-height:20px;font-size:12px;white-space:pre;">draw_coming_soon_ui [1722]</div>
<svg style="position:absolute;left:39px;top:298.7px" width="15" height="14"><use href="#ic-func"/></svg>
<div style="position:absolute;left:56.00px;top:294.75px;height:20px;line-height:20px;font-size:12px;white-space:pre;">draw_dram_ui [1533]</div>
<svg style="position:absolute;left:22.5px;top:323.0px" width="11" height="6"><use href="#ic-exp"/></svg>
<svg style="position:absolute;left:39px;top:319.7px" width="15" height="14"><use href="#ic-func"/></svg>
<div style="position:absolute;left:56.00px;top:315.75px;height:20px;line-height:20px;font-size:12px;white-space:pre;">draw_dsu_ui [960]</div>
<svg style="position:absolute;left:57px;top:340.7px" width="15" height="14"><use href="#ic-func"/></svg>
<div style="position:absolute;left:74.00px;top:336.75px;height:20px;line-height:20px;font-size:12px;white-space:pre;">read_pvtpll_freq [946]</div>
<svg style="position:absolute;left:39px;top:361.7px" width="15" height="14"><use href="#ic-func"/></svg>
<div style="position:absolute;left:56.00px;top:357.75px;height:20px;line-height:20px;font-size:12px;white-space:pre;">draw_general_info_ui [271]</div>
<svg style="position:absolute;left:22.5px;top:386.0px" width="11" height="6"><use href="#ic-exp"/></svg>
<svg style="position:absolute;left:39px;top:382.7px" width="15" height="14"><use href="#ic-func"/></svg>
<div style="position:absolute;left:56.00px;top:378.75px;height:20px;line-height:20px;font-size:12px;white-space:pre;">draw_gpu_ui [1123]</div>
<svg style="position:absolute;left:57px;top:403.7px" width="15" height="14"><use href="#ic-func"/></svg>
<div style="position:absolute;left:74.00px;top:399.75px;height:20px;line-height:20px;font-size:12px;white-space:pre;">read_pvtpll_freq [1109]</div>
<svg style="position:absolute;left:39px;top:424.7px" width="15" height="14"><use href="#ic-func"/></svg>
<div style="position:absolute;left:56.00px;top:420.75px;height:20px;line-height:20px;font-size:12px;white-space:pre;">draw_header [260]</div>
<svg style="position:absolute;left:22.5px;top:449.0px" width="11" height="6"><use href="#ic-exp"/></svg>
<svg style="position:absolute;left:39px;top:445.7px" width="15" height="14"><use href="#ic-func"/></svg>
<div style="position:absolute;left:56.00px;top:441.75px;height:20px;line-height:20px;font-size:12px;white-space:pre;">draw_littlecore_ui [765]</div>
<svg style="position:absolute;left:57px;top:466.7px" width="15" height="14"><use href="#ic-func"/></svg>
<div style="position:absolute;left:74.00px;top:462.75px;height:20px;line-height:20px;font-size:12px;white-space:pre;">get_clk_freq [818]</div>
<svg style="position:absolute;left:57px;top:487.7px" width="15" height="14"><use href="#ic-func"/></svg>
<div style="position:absolute;left:74.00px;top:483.75px;height:20px;line-height:20px;font-size:12px;white-space:pre;">read_pvtpll_freq [751]</div>
<svg style="position:absolute;left:39px;top:508.7px" width="15" height="14"><use href="#ic-func"/></svg>
<div style="position:absolute;left:56.00px;top:504.75px;height:20px;line-height:20px;font-size:12px;white-space:pre;">draw_npu_ui [1341]</div>
<svg style="position:absolute;left:39px;top:529.7px" width="15" height="14"><use href="#ic-func"/></svg>
<div style="position:absolute;left:56.00px;top:525.75px;height:20px;line-height:20px;font-size:12px;white-space:pre;">draw_tab_content [1740]</div>
<svg style="position:absolute;left:39px;top:550.7px" width="15" height="14"><use href="#ic-func"/></svg>
<div style="position:absolute;left:56.00px;top:546.75px;height:20px;line-height:20px;font-size:12px;white-space:pre;">get_bits [73]</div>
<svg style="position:absolute;left:39px;top:571.7px" width="15" height="14"><use href="#ic-func"/></svg>
<div style="position:absolute;left:56.00px;top:567.75px;height:20px;line-height:20px;font-size:12px;white-space:pre;">get_val [234]</div>
<svg style="position:absolute;left:39px;top:592.7px" width="15" height="14"><use href="#ic-func"/></svg>
<div style="position:absolute;left:56.00px;top:588.75px;height:20px;line-height:20px;font-size:12px;white-space:pre;">init_colors [1814]</div>
<svg style="position:absolute;left:39px;top:613.7px" width="15" height="14"><use href="#ic-func"/></svg>
<div style="position:absolute;left:56.00px;top:609.75px;height:20px;line-height:20px;font-size:12px;white-space:pre;">is_gpu_safe_to_reset [1090]</div>
<svg style="position:absolute;left:39px;top:634.7px" width="15" height="14"><use href="#ic-func"/></svg>
<div style="position:absolute;left:56.00px;top:630.75px;height:20px;line-height:20px;font-size:12px;white-space:pre;">read_field [106]</div>
<svg style="position:absolute;left:39px;top:655.7px" width="15" height="14"><use href="#ic-func"/></svg>
<div style="position:absolute;left:56.00px;top:651.75px;height:20px;line-height:20px;font-size:12px;white-space:pre;">set_bits [77]</div>
<svg style="position:absolute;left:39px;top:676.7px" width="15" height="14"><use href="#ic-func"/></svg>
<div style="position:absolute;left:56.00px;top:672.75px;height:20px;line-height:20px;font-size:12px;white-space:pre;">set_gpu_power_on [1070]</div>
<svg style="position:absolute;left:39px;top:697.7px" width="15" height="14"><use href="#ic-func"/></svg>
<div style="position:absolute;left:56.00px;top:693.75px;height:20px;line-height:20px;font-size:12px;white-space:pre;">tui [1821]</div>
<svg style="position:absolute;left:39px;top:718.7px" width="15" height="14"><use href="#ic-func"/></svg>
<div style="position:absolute;left:56.00px;top:714.75px;height:20px;line-height:20px;font-size:12px;white-space:pre;">write_field [114]</div>
<svg style="position:absolute;left:4.5px;top:743.0px" width="11" height="6"><use href="#ic-exp"/></svg>
<svg style="position:absolute;left:21px;top:739.0px" width="15" height="14"><use href="#ic-var"/></svg>
<div style="position:absolute;left:38.00px;top:735.75px;height:20px;line-height:20px;font-size:12px;white-space:pre;">Variables</div>
</div>
<div id="ed" style="position:absolute;left:156px;top:105px;width:789px;height:734px;background:#fff;overflow:hidden">
<div style="position:absolute;left:0;top:0;width:56px;height:100%;background:#d0d0d0"></div>
<div style="position:absolute;left:56px;top:0;width:13px;height:100%;background:#e7e7e7"></div>
<div style="position:absolute;left:63px;top:0;width:1px;height:100%;background:#000"></div>
<div style="position:absolute;left:646px;top:0;width:1px;height:100%;background:#d8d8d8"></div>
<pre class="cd" style="left:15px;top:0.6px">449
450
451
452
453
454
455
456
457
458
459
460
461
462
463
464
465
466
467
468
469
470
471
472
473
474
475
476
477
478
479
480
481
482
483
484
485
486
487
488
489
490
491
492
493
494
495
496
497</pre>
<pre class="cd" style="left:70px;top:0.6px">

            mem_obj = reg_mem[base_tag]
            reg_val = mem_obj.read32(offset)
            val = get_bits(reg_val, lsb, msb)

            <b class="k">if</b> ftype == <b class="s">"enum"</b>:
                disp_val = <b class="bi">next</b>((k <b class="k">for</b> k, v <b class="k">in</b> enum_map.items() <b class="k">if</b> v == val), <b class="s">f"unknown(</b><b class="s">{</b>val<b class="s">}</b><b class="s">)"</b>)
                extra = <b class="s">f"Options: </b><b class="s">{</b><b class="bi">list</b>(enum_map.keys())<b class="s">}</b><b class="s">"</b>
            <b class="k">else</b>:
                disp_val = <b class="bi">str</b>(val)
                extra = <b class="s">f"Range: </b><b class="s">{</b>val_range<b class="s">}</b><b class="s">"</b> <b class="k">if</b> val_range <b class="k">else</b> <b class="s">""</b>

            display_lines.append(((name, disp_val, extra), <b class="s">"field"</b>, idx))
            idx += <b class="n">1</b>

    m_b0 = get_val(<b class="s">"m_b0pll"</b>, FLAT_FIELDS)
    p_b0 = get_val(<b class="s">"p_b0pll"</b>, FLAT_FIELDS)
    s_b0 = get_val(<b class="s">"s_b0pll"</b>, FLAT_FIELDS)

    b0pll_freq = (XIN_OSC0_FREQ * m_b0) / p_b0 / (<b class="n">1</b> &lt;&lt; s_b0) <b class="k">if</b> m_b0 <b class="k">and</b> p_b0 <b class="k">else</b> <b class="n">0</b>

    bigcore0_slow_sel = get_val(<b class="s">"bigcore0_slow_sel"</b>, FLAT_FIELDS)
    bigcore0_gpll_div = get_val(<b class="s">"bigcore0_gpll_div"</b>, FLAT_FIELDS)
    bigcore0_mux_sel = get_val(<b class="s">"bigcore0_mux_sel"</b>, FLAT_FIELDS)

    b0_uc_div = get_val(<b class="s">"b0_uc_div"</b>, FLAT_FIELDS)
    b1_uc_div = get_val(<b class="s">"b1_uc_div"</b>, FLAT_FIELDS)

    b0_clk_sel = get_val(<b class="s">"b0_clk_sel"</b>, FLAT_FIELDS)
    b1_clk_sel = get_val(<b class="s">"b1_clk_sel"</b>, FLAT_FIELDS)

    <b class="k">if</b> bigcore0_mux_sel == <b class="s">"slow"</b>:
        bigcore0_mux_clk = XIN_OSC0_FREQ <b class="k">if</b> bigcore0_slow_sel == <b class="s">"xin_osc0_func"</b> <b class="k">else</b> DEEPSLOW_FREQ
    <b class="k">elif</b> bigcore0_mux_sel == <b class="s">"gpll"</b>:
        bigcore0_mux_clk = GPLL_FREQ / (bigcore0_gpll_div + <b class="n">1</b>)
    <b class="k">elif</b> bigcore0_mux_sel == <b class="s">"b0pll"</b>:
        bigcore0_mux_clk = b0pll_freq
    <b class="k">else</b>:
        bigcore0_mux_clk = <b class="n">0</b>

    b0_uc_clk = bigcore0_mux_clk / (b0_uc_div + <b class="n">1</b>)
    b1_uc_clk = bigcore0_mux_clk / (b1_uc_div + <b class="n">1</b>)

    mem_grf = Registers(GRF_BIGCORE0_BASE, <b class="n">0x1000</b>)
    bigcore0_pvtpll_freq = read_pvtpll_freq(mem_grf)
    mem_grf.close()

    <b class="k">def</b> <b class="fn">get_clk_freq</b>(sel, uc_clk):
        <b class="k">if</b> sel <b class="k">in</b> (<b class="s">"UC_b0"</b>, <b class="s">"UC_b1"</b>):</pre>
<div class="fb" style="left:59px;top:78px"><i></i></div>
<div class="fb" style="left:59px;top:123px"><i></i></div>
<div class="fb" style="left:59px;top:468px"><i></i></div>
<div class="fb" style="left:59px;top:498px"><i></i></div>
<div class="fb" style="left:59px;top:528px"><i></i></div>
<div class="fb" style="left:59px;top:558px"><i></i></div>
<div class="fb" style="left:59px;top:708px"><i></i></div>
<div class="fb" style="left:59px;top:723px"><i></i></div>
<div style="position:absolute;left:64px;top:112px;width:5px;height:1px;background:#000"></div>
<div style="position:absolute;left:64px;top:157px;width:5px;height:1px;background:#000"></div>
<div style="position:absolute;left:64px;top:202px;width:5px;height:1px;background:#000"></div>
<div style="position:absolute;left:64px;top:487px;width:5px;height:1px;background:#000"></div>
<div style="position:absolute;left:64px;top:517px;width:5px;height:1px;background:#000"></div>
<div style="position:absolute;left:64px;top:547px;width:5px;height:1px;background:#000"></div>
<div style="position:absolute;left:64px;top:577px;width:5px;height:1px;background:#000"></div>
</div>
<div style="position:absolute;left:945px;top:105px;width:13px;height:734px;background:#efefee;border-left:1px solid #e2e2e1"><div style="position:absolute;left:3px;top:162px;width:6px;height:38px;background:#cdcdcd;border-radius:3px"></div></div>
<div style="position:absolute;left:160px;top:839px;width:797px;height:13px;background:#efefee;border-top:1px solid #e2e2e1"><div style="position:absolute;left:3px;top:3px;width:272px;height:6px;background:#cdcdcd;border-radius:3px"></div></div>
<div style="position:absolute;left:0px;top:852px;width:959px;height:2px;background:#d6d6d5"></div>
<div style="position:absolute;left:0px;top:854px;width:90px;height:127px;background:#f8f8f7"></div>
<div style="position:absolute;left:0px;top:879px;width:90px;height:102px;background:#e8e8e7;border-top:1px solid #dcdcdb"></div>
<div style="position:absolute;left:86px;top:879px;width:4px;height:77px;background:#4480c6"></div>
<div class="mi" style="position:absolute;left:25.50px;top:908.89px;height:20px;line-height:20px;font-size:13.33px;white-space:pre;letter-spacing:-0.330px;">Status</div>
<svg style="position:absolute;left:39px;top:864px" width="12" height="7"><path d="M0 6.5 L6 0.5 L12 6.5Z" fill="#d6d6d6"/></svg>
<svg style="position:absolute;left:39px;top:964px" width="12" height="7"><path d="M0 0.5 L12 0.5 L6 6.5Z" fill="#8c8c8c"/></svg>
<div style="position:absolute;left:90px;top:854px;width:869px;height:127px;background:#fbfbfb;border-left:1px solid #dcdcdc"></div>
<div class="mg" style="left:94px;top:856px">16:32:16: This is Geany 1.37.1.</div>
<div class="mg" style="left:94px;top:877px">16:32:16: File /home/orangepi/Documents/oc/rk3588_octool_v8.py opened (1).</div>
<div style="position:absolute;left:0px;top:981px;width:959px;height:37px;background:#f1f1f0;border-top:1px solid #dcdcdb"></div>
<div class="mi" style="position:absolute;left:14.00px;top:990.19px;height:20px;line-height:20px;font-size:13.33px;white-space:pre;letter-spacing:-0.314px;">line: 469 / 1992</div>
<div class="mi" style="position:absolute;left:146.00px;top:990.19px;height:20px;line-height:20px;font-size:13.33px;white-space:pre;letter-spacing:-0.133px;">col: 0</div>
<div class="mi" style="position:absolute;left:210.00px;top:990.19px;height:20px;line-height:20px;font-size:13.33px;white-space:pre;letter-spacing:-0.077px;">sel: 0</div>
<div class="mi" style="position:absolute;left:274.00px;top:990.19px;height:20px;line-height:20px;font-size:13.33px;white-space:pre;letter-spacing:0.079px;">INS</div>
<div class="mi" style="position:absolute;left:320.00px;top:990.19px;height:20px;line-height:20px;font-size:13.33px;white-space:pre;letter-spacing:-0.257px;">TAB</div>
<div class="mi" style="position:absolute;left:369.00px;top:990.19px;height:20px;line-height:20px;font-size:13.33px;white-space:pre;letter-spacing:-0.253px;">mode: LF</div>
<div class="mi" style="position:absolute;left:453.00px;top:990.19px;height:20px;line-height:20px;font-size:13.33px;white-space:pre;letter-spacing:-0.147px;">encoding: UTF-8</div>
<div class="mi" style="position:absolute;left:583.00px;top:990.19px;height:20px;line-height:20px;font-size:13.33px;white-space:pre;letter-spacing:-0.151px;">filetype: Python</div>
<div class="mi" style="position:absolute;left:709.00px;top:990.19px;height:20px;line-height:20px;font-size:13.33px;white-space:pre;letter-spacing:-0.204px;">scope: draw_bigcore0_ui</div>
</div>
</div>
</body></html>
